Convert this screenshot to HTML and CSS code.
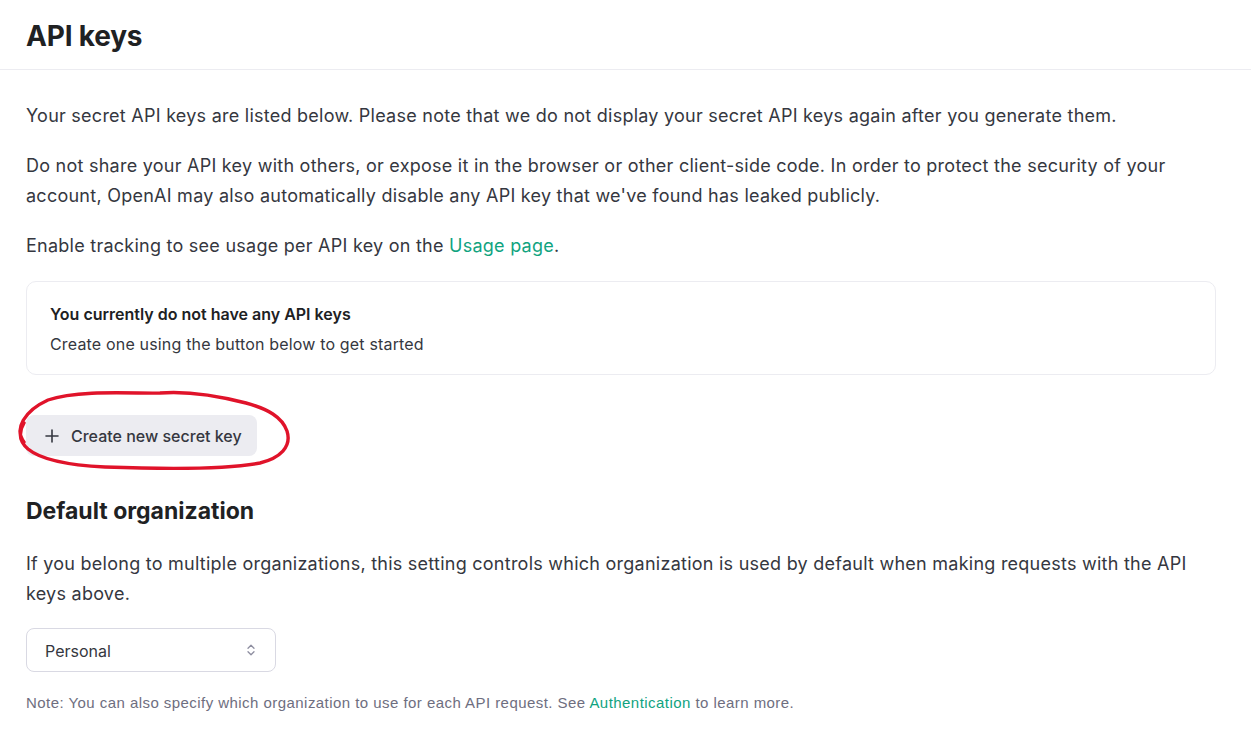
FILE: index.html
```html
<!DOCTYPE html>
<html lang="en">
<head>
<meta charset="utf-8">
<title>API keys</title>
<link rel="stylesheet" href="styles.css">
</head>
<body>
<header class="page-header">
  <h1 class="page-title">API keys</h1>
</header>
<main class="content">
  <p class="para">Your secret API keys are listed below. Please note that we do not display your secret API keys again after you generate them.</p>
  <p class="para">Do not share your API key with others, or expose it in the browser or other client-side code. In order to protect the security of your account, OpenAI may also automatically disable any API key that we've found has leaked publicly.</p>
  <p class="para">Enable tracking to see usage per API key on the <a class="link" href="#">Usage page</a>.</p>

  <div class="empty-card">
    <div class="empty-title">You currently do not have any API keys</div>
    <div class="empty-sub">Create one using the button below to get started</div>
  </div>

  <div class="btn-wrap">
    <button class="btn-create" type="button">
      <svg class="plus" width="14" height="14" viewBox="0 0 14 14" aria-hidden="true"><path d="M7 1v12M1 7h12" stroke="#353740" stroke-width="1.6" stroke-linecap="round"/></svg>
      <span>Create new secret key</span>
    </button>
    <svg class="annotation" width="290" height="92" viewBox="0 0 290 92" aria-hidden="true">
      <path d="M14 57 C 4 44, 14 26, 38 15 C 70 4, 130 9, 150 8 C 175 6, 205 10, 236 18 C 258 24, 272 32, 277 46 C 282 62, 270 73, 250 78 C 215 85, 150 84, 95 82 C 55 80, 30 74, 18 64 C 10 57, 8 48, 14 38" fill="none" stroke="#e0132a" stroke-width="3.4" stroke-linecap="round" stroke-linejoin="round"/>
    </svg>
  </div>

  <h2 class="section-title">Default organization</h2>
  <p class="para para-tight">If you belong to multiple organizations, this setting controls which organization is used by default when making requests with the API keys above.</p>

  <div class="select">
    <span class="select-value">Personal</span>
    <svg class="select-icon" width="10" height="14" viewBox="0 0 10 14" aria-hidden="true"><path d="M2 5.2 L5 2.2 L8 5.2 M2 8.8 L5 11.8 L8 8.8" fill="none" stroke="#8e8ea0" stroke-width="1.3" stroke-linecap="round" stroke-linejoin="round"/></svg>
  </div>

  <p class="note">Note: You can also specify which organization to use for each API request. See <a class="link" href="#">Authentication</a> to learn more.</p>
</main>
</body>
</html>
```

FILE: styles.css
```css
* { box-sizing: border-box; }

html, body {
  margin: 0;
  padding: 0;
  background: #ffffff;
}

body {
  font-family: "Inter", "Noto Sans", sans-serif;
  color: #353740;
  width: 1251px;
}

.page-header {
  padding: 20px 26px 17px;
  border-bottom: 1px solid #ececf1;
}

.page-title {
  margin: 0;
  font-size: 28px;
  line-height: 32px;
  font-weight: 700;
  color: #202123;
  letter-spacing: -0.2px;
}

.content {
  padding: 31px 35px 0 26px;
  display: flex;
  flex-direction: column;
  align-items: flex-start;
}

.para {
  margin: 0 0 20px;
  font-size: 18px;
  line-height: 30px;
  letter-spacing: 0.25px;
  color: #353740;
}

.para-tight {
  margin-bottom: 19px;
}

.link {
  color: #10a37f;
  text-decoration: none;
}

.empty-card {
  align-self: stretch;
  border: 1px solid #ececf1;
  border-radius: 10px;
  padding: 17px 23px 15px;
  display: flex;
  flex-direction: column;
}

.empty-title {
  font-size: 16px;
  line-height: 30px;
  font-weight: 600;
  color: #202123;
}

.empty-sub {
  font-size: 16px;
  line-height: 30px;
  letter-spacing: 0.17px;
  color: #353740;
}

.btn-wrap {
  position: relative;
  margin-top: 40px;
}

.btn-create {
  display: flex;
  align-items: center;
  gap: 12px;
  height: 41px;
  padding: 0 15px 0 19px;
  border: none;
  border-radius: 8px;
  background: #ececf1;
  font-family: inherit;
  font-size: 16px;
  font-weight: 500;
  color: #353740;
  cursor: pointer;
}

.plus { flex: none; }

.annotation {
  position: absolute;
  left: -16px;
  top: -30px;
  pointer-events: none;
}

.section-title {
  margin: 40px 0 23px;
  font-size: 23px;
  line-height: 30px;
  font-weight: 700;
  color: #202123;
}

.select {
  width: 250px;
  height: 44px;
  border: 1px solid #d9d9e3;
  border-radius: 8px;
  display: flex;
  align-items: center;
  justify-content: space-between;
  padding: 0 19px 0 18px;
  font-size: 16px;
  color: #353740;
}

.select-value {
  padding-top: 2px;
}

.note {
  margin: 21px 0 0;
  font-family: "Liberation Sans", Arial, sans-serif;
  font-size: 15px;
  line-height: 20px;
  letter-spacing: 0.45px;
  color: #6e6e80;
}
```
